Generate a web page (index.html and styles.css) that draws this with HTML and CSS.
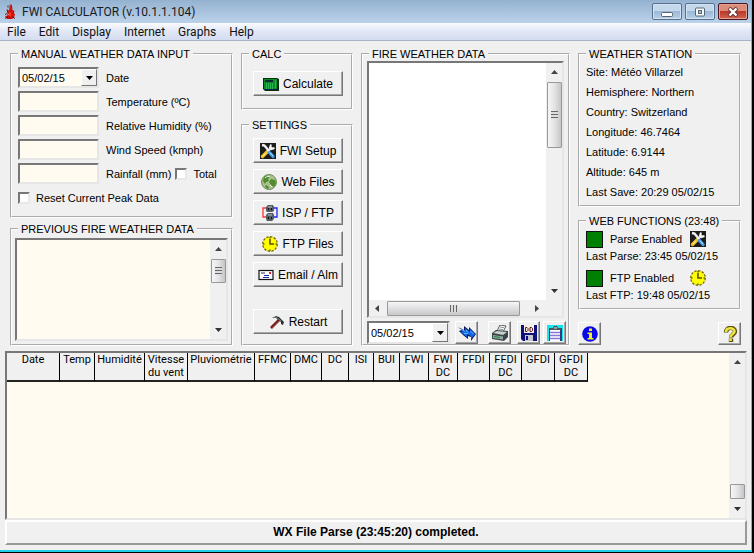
FILE: index.html
```html
<!DOCTYPE html>
<html lang="en">
<head>
<meta charset="utf-8">
<title>FWI CALCULATOR (v.10.1.1.104)</title>
<link rel="stylesheet" href="styles.css">
</head>
<body>
<svg class="defs" aria-hidden="true">
  <symbol id="tools" viewBox="0 0 16 16">
    <rect width="16" height="16" fill="#1c1c1c"/>
    <path d="M2.500 13.500l5-5" stroke="#f2c230" stroke-width="3.400" stroke-linecap="round"/>
    <path d="M3 13l3-3" stroke="#fff0a0" stroke-width="1"/>
    <path d="M8 8l4-4" stroke="#e8e8e8" stroke-width="2.400"/>
    <path d="M11 1.500l-1 3 1.500 1.500 3-1" fill="none" stroke="#f4f4f4" stroke-width="2"/>
    <path d="M2 2l2.500.500L9 8" fill="none" stroke="#f4f4f4" stroke-width="2.400"/>
    <path d="M9.500 9.500l3.500 4" stroke="#3e9be8" stroke-width="3.400" stroke-linecap="round"/>
    <path d="M10 9.500l3 3.500" stroke="#bfe4ff" stroke-width="1"/>
  </symbol>
  <symbol id="clock" viewBox="0 0 16 16">
    <circle cx="8" cy="8" r="7.300" fill="#ff0" stroke="#7a6a00" stroke-width="1.300" stroke-dasharray="2.400 1.400"/>
    <path d="M8 3v5h4" fill="none" stroke="#5c5200" stroke-width="1.600"/>
    <path d="M8 1v1.500M8 13.500V15M1 8h1.500M13.500 8H15" stroke="#222" stroke-width="1"/>
  </symbol>
  <symbol id="up" viewBox="0 0 7 4"><path d="M0 4L3.500 0 7 4z" fill="#444"/></symbol>
  <symbol id="down" viewBox="0 0 7 4"><path d="M0 0h7L3.500 4z" fill="#333"/></symbol>
  <symbol id="drop" viewBox="0 0 7 4"><path d="M0 0h7L3.500 4z" fill="#000"/></symbol>
</svg>

<div class="window">
  <header class="titlebar">
    <svg class="flame" viewBox="0 0 12 16"><path d="M4 9L3 6l2 1 .500-4L6 0l1.500 5L7 8l2-2 .500 3 1.500 2-1 3-2 1.500H3L1 13l2-1 1-3z" fill="#e01208"/><path d="M4 2v2M3 6l1 4M7 1l1 4-1 3M10 7l-1 3M1 11l2-1M1 15l3-2M11 15l-3-2M6 15l-1-3" stroke="#4a1410" stroke-width=".900" fill="none"/><path d="M6 9v4M4 12l1-2" stroke="#ff6a4a" fill="none"/></svg>
    <h1>FWI CALCULATOR (v.10.1.1.104)</h1>
    <div class="controls">
      <button type="button" aria-label="Minimize"><svg viewBox="0 0 12 10"><rect x=".500" y="5.500" width="11" height="4" rx="1" fill="#fff" stroke="#5a6470"/></svg></button>
      <button type="button" aria-label="Maximize"><svg viewBox="0 0 12 10"><rect x="1.500" y="1" width="9" height="8" rx="1" fill="#f4f8fc" stroke="#5a6470"/><rect x="4.500" y="3.500" width="3" height="3" fill="#a8c4e2" stroke="#5a6470"/></svg></button>
      <button type="button" class="close" aria-label="Close"><svg viewBox="0 0 12 10"><path d="M2 1l8 8M10 1L2 9" stroke="#5c3238" stroke-width="4"/><path d="M2.500 1.500l7 7M9.500 1.500l-7 7" stroke="#fff" stroke-width="2.400"/></svg></button>
    </div>
  </header>
  <nav class="menu">
    <a href="#">File</a><a href="#">Edit</a><a href="#">Display</a><a href="#">Internet</a><a href="#">Graphs</a><a href="#">Help</a>
  </nav>

  <main>
    <div class="panels">
      <div class="column">
        <fieldset class="manual">
          <legend>MANUAL WEATHER DATA INPUT</legend>
          <span class="combo"><select id="date"><option>05/02/15</option></select><i><svg><use href="#drop"/></svg></i></span>
          <label for="date">Date</label>
          <input type="text" id="temp"><label for="temp">Temperature (ºC)</label>
          <input type="text" id="hum"><label for="hum">Relative Humidity (%)</label>
          <input type="text" id="wind"><label for="wind">Wind Speed (kmph)</label>
          <input type="text" id="rain">
          <div class="rain"><label for="rain">Rainfall (mm)</label><label class="check"><input type="checkbox">Total</label></div>
          <label class="check reset"><input type="checkbox">Reset Current Peak Data</label>
        </fieldset>
        <fieldset class="previous">
          <legend>PREVIOUS FIRE WEATHER DATA</legend>
          <div class="well cream">
            <textarea aria-label="Previous fire weather data" readonly></textarea>
            <div class="scroll"><svg><use href="#up"/></svg><b class="thumb small"></b><svg class="end"><use href="#down"/></svg></div>
          </div>
        </fieldset>
      </div>

      <div class="column">
        <fieldset class="calc">
          <legend>CALC</legend>
          <button type="button" class="push"><svg class="icon" viewBox="0 0 16 16"><path d="M0 2h14l2 1v12H2l-2-2z" fill="#04300e"/><rect x="1" y="3" width="13" height="10" fill="#0a8a28"/><rect x="2" y="4" width="8" height="2" fill="#0b2a38"/><path d="M3 8h8M3 10h8M3 12h8" stroke="#4be070" stroke-dasharray="1 1"/><path d="M12.500 4v8" stroke="#0c5"/><path d="M1 13.500h14" stroke="#0a1c50"/></svg>Calculate</button>
        </fieldset>
        <fieldset class="settings">
          <legend>SETTINGS</legend>
          <button type="button" class="push"><svg class="icon"><use href="#tools"/></svg>FWI Setup</button>
          <button type="button" class="push"><svg class="icon" viewBox="0 0 16 16"><circle cx="8" cy="8" r="7.500" fill="#a9c08f" stroke="#6f8a58"/><path d="M3 3c3-2 5-1 6 0L7 5l1 2-3 1-1 2-2-3zM10 5l4 1 1 3-2 4-3-2-2-3zM5 11l3 2-1 2-3-2z" fill="#4f8a2c"/><path d="M4 4c2-2 4-2 5-1M9 11l2 2" stroke="#f0f8e4" fill="none"/></svg>Web Files</button>
          <button type="button" class="push"><svg class="icon" viewBox="0 0 16 16"><path d="M5 3H1v9h4" fill="none" stroke="#f33" stroke-width="1.300"/><path d="M11 3h4v9h-4" fill="none" stroke="#22f" stroke-width="1.300"/><path d="M4 2l2-2h5l1 2v4l-2 1H5L4 6z" fill="#535b60"/><path d="M4 10l2-2h5l1 2v4l-2 2H5l-1-2z" fill="#535b60"/><path d="M6 2h4M6 10h4" stroke="#b8c4c8"/><path d="M6 4h1M9 4h1M6 13h1M9 13h1" stroke="#111" stroke-width="2"/></svg>ISP / FTP</button>
          <button type="button" class="push"><svg class="icon"><use href="#clock"/></svg>FTP Files</button>
          <button type="button" class="push"><svg class="icon" viewBox="0 0 16 16"><rect x="1" y="3.500" width="14" height="9" fill="#fff" stroke="#111" stroke-width="1.200"/><path d="M3 6h4" stroke="#334"/><path d="M12 5v2" stroke="#e22" stroke-width="2"/><path d="M6 8.500h5M5 10.500h6" stroke="#22a"/></svg>Email / Alm</button>
          <button type="button" class="push restart"><svg class="icon" viewBox="0 0 16 16"><path d="M2 14l8-8" stroke="#6e1c1c" stroke-width="2.600"/><path d="M3 14l7-7" stroke="#b05048" stroke-width=".700"/><path d="M3 4l4-2 3 1 5 5-1 3-2-1V8L9 6 7 4z" fill="#2b2f33"/><path d="M4 4l3-1 5 4" stroke="#9aa" fill="none" stroke-width=".700"/></svg>Restart</button>
        </fieldset>
      </div>

      <fieldset class="fire">
        <legend>FIRE WEATHER DATA</legend>
        <div class="well">
          <textarea aria-label="Fire weather data" readonly></textarea>
          <div class="scroll"><svg><use href="#up"/></svg><b class="thumb tall"></b><svg class="end"><use href="#down"/></svg></div>
          <div class="hscroll"><svg class="side" viewBox="0 0 4 7"><path d="M4 0v7L0 3.500z" fill="#444"/></svg><b class="thumb wide"></b><svg class="side" viewBox="0 0 4 7"><path d="M0 0v7l4-3.500z" fill="#444"/></svg></div>
        </div>
        <div class="tools">
          <span class="combo white"><select aria-label="Data date"><option>05/02/15</option></select><i><svg><use href="#drop"/></svg></i></span>
          <button type="button" class="tool" aria-label="Go"><svg class="icon arrows" viewBox="0 0 18 16"><path d="M0 2l6 3V1l5 4V2l7 7-5 7v-4l-3-1v3l-5-4-4-4 3-1z" fill="#0a1a60"/><path d="M1 3l6 3V3l5 4V4l5 5-4 5v-3l-4-2v3L5 9l-2-2 2-1z" fill="#1268e8"/><path d="M3 4l4 2.500M8 5l2 2.500M12.500 6l3 3M6 8.500h4" stroke="#58b8ff" fill="none"/></svg></button>
          <button type="button" class="tool print" aria-label="Print"><svg class="icon" viewBox="0 0 16 16"><path d="M5 6l3-6 6 1-3 6z" fill="#fff" stroke="#333" stroke-width=".800"/><path d="M8 2l4 .700M7 4l4 .700" stroke="#678" stroke-width=".800"/><path d="M0 8l4-3 12 1v6l-4 4-12-2z" fill="#3c4646"/><path d="M1 8l4-2 10 1-4 3z" fill="#c8d0d0"/><path d="M1 10l10 1.500v3L1 13z" fill="#9aa8a4"/><path d="M2 11.500l6 1" stroke="#0c8a3a" stroke-width="1.200"/></svg></button>
          <button type="button" class="tool" aria-label="Save"><svg class="icon" viewBox="0 0 16 16"><path d="M0 0h16v16H2l-2-2z" fill="#10107c"/><rect x="3" y="0" width="10" height="8" fill="#f0f0e8"/><path d="M4.500 2.500h1.500l1 1v2l-1 1H4.500zM9 2.500h1.500l1 1v2l-1 1H9z" fill="none" stroke="#611"/><rect x="4" y="10" width="8" height="6" fill="#c8c8d0"/><rect x="5" y="11" width="2" height="4" fill="#10107c"/></svg></button>
          <button type="button" class="tool clip" aria-label="Copy to clipboard"><svg class="icon" viewBox="0 0 16 16"><rect width="16" height="16" fill="#18e4ee"/><rect x="2" y="3" width="13" height="13" fill="#343c80"/><rect x="3" y="5" width="10" height="11" fill="#fff"/><path d="M3 7.500h10M3 10.500h10M3 13.500h10" stroke="#8478d8" stroke-width="1.300"/><path d="M3 5V3h3l1-2h3l1 2h3v2z" fill="#4a5858"/><path d="M7 3h3" stroke="#d4e4e4"/></svg></button>
        </div>
      </fieldset>

      <div class="column">
        <fieldset class="station">
          <legend>WEATHER STATION</legend>
          <p>Site: Météo Villarzel</p>
          <p>Hemisphere: Northern</p>
          <p>Country: Switzerland</p>
          <p>Longitude: 46.7464</p>
          <p>Latitude: 6.9144</p>
          <p>Altitude: 645 m</p>
          <p>Last Save: 20:29 05/02/15</p>
        </fieldset>
        <fieldset class="web">
          <legend>WEB FUNCTIONS (23:48)</legend>
          <div class="state"><b></b><span>Parse Enabled</span><svg class="icon"><use href="#tools"/></svg></div>
          <p>Last Parse: 23:45 05/02/15</p>
          <div class="state"><b></b><span>FTP Enabled</span><svg class="icon"><use href="#clock"/></svg></div>
          <p>Last FTP: 19:48 05/02/15</p>
        </fieldset>
        <div class="help">
          <button type="button" class="tool" aria-label="Information"><svg class="icon" viewBox="0 0 16 16"><circle cx="8" cy="8" r="7.800" fill="#0808e8"/><path d="M7 2.500h3v2.500H7zM5.500 6.500H10V12h1.500v1.500h-6V12H7V8H5.500z" fill="#f4f020"/></svg></button>
          <button type="button" class="tool" aria-label="Help"><svg class="icon" viewBox="0 0 16 16"><path d="M4 6.500c0-6 9-6 9-1C13 8 9 8.500 9 11.500M9 12.500V16" fill="none" stroke="#5a5410" stroke-width="4.400"/><path d="M4 6c0-5 8.500-5 8.500-.500C12.500 8 8.500 8 8.500 11M8.500 12.500V15" fill="none" stroke="#f0e440" stroke-width="2.600"/></svg></button>
        </div>
      </div>
    </div>

    <div class="grid">
      <div class="sheet">
        <table>
          <thead>
            <tr><th>Date</th><th>Temp</th><th>Humidité</th><th>Vitesse<br>du vent</th><th>Pluviométrie</th><th>FFMC</th><th>DMC</th><th>DC</th><th>ISI</th><th>BUI</th><th>FWI</th><th>FWI<br>DC</th><th>FFDI</th><th>FFDI<br>DC</th><th>GFDI</th><th>GFDI<br>DC</th></tr>
          </thead>
          <tbody></tbody>
        </table>
      </div>
      <div class="scroll"><svg><use href="#up"/></svg><b class="thumb low"></b><svg><use href="#down"/></svg></div>
    </div>
    <div class="status" role="status">WX File Parse (23:45:20) completed.</div>
  </main>
</div>
</body>
</html>
```
FILE: styles.css
```css
* { box-sizing: border-box; }
body {
  margin: 0;
  background: #000;
  font: 11px/14px "Liberation Sans", Arial, sans-serif;
  color: #000;
}
.defs { position: absolute; width: 0; height: 0; }
.window {
  min-height: calc(100vh - 1px);
  margin-right: 2px;
  display: flex;
  flex-direction: column;
  background: #f0f0f0;
  border-right: 1px solid #2cd2ee;
  border-bottom: 2px solid #22cfe6;
}

/* Title bar and menu */
.titlebar {
  height: 23px;
  padding: 0 3px 0 4px;
  display: flex;
  align-items: center;
  background: linear-gradient(#94b2d0, #bcd2ea);
}
.flame { width: 12px; height: 17px; margin-right: 6px; }
h1 {
  flex: 1;
  margin: 0;
  font: 12px/18px Roboto, "Noto Sans", sans-serif;
  color: #1a1a22;
}
.controls { display: flex; gap: 3px; }
.controls button {
  width: 30px;
  height: 17px;
  padding: 0;
  display: grid;
  place-items: center;
  border: 1px solid #56708e;
  border-radius: 2px;
  box-shadow: inset 0 0 0 1px #d4e3f2;
  background: linear-gradient(#c4d8ec 50%, #9ab8d8 50%, #b8d0e8);
}
.controls svg { width: 12px; height: 10px; }
.controls .close {
  border-color: #4c1420;
  box-shadow: inset 0 0 0 1px #e0a496;
  background: linear-gradient(#dc8c78 45%, #b8392a 50%, #d4654e);
}
.menu {
  height: 18px;
  padding: 0 7px;
  display: flex;
  align-items: center;
  gap: 13px;
  background: linear-gradient(#fafbfe, #e2e8f6 45%, #d4dcf0);
  border-bottom: 1px solid #aab2c4;
}
.menu a {
  font: 12px/16px Roboto, "Noto Sans", sans-serif;
  color: #111;
  text-decoration: none;
}

main { flex: 1; display: flex; flex-direction: column; padding: 6px 4px 5px 5px; }
.panels {
  display: grid;
  grid-template-columns: 223fr 112fr 209fr 163fr;
  gap: 8px;
  padding: 0 6px 0 5px;
}
.column { display: flex; flex-direction: column; gap: 4px; min-width: 0; }
fieldset {
  --side: 6px;
  margin: 0;
  min-width: 0;
  padding: 0 var(--side);
  border: 2px groove #fff;
}
legend { margin-left: calc(6px - var(--side)); padding: 0 3px; }
p { margin: 0; }

/* Sunken inputs */
input[type="text"], .combo, .well, .grid {
  border: 2px solid;
  border-color: #777 #e6e6e6 #e6e6e6 #777;
  background: #fffbf0;
}
input[type="text"] { width: 81px; height: 21px; }
.combo { display: grid; width: 81px; height: 21px; }
.combo select {
  grid-area: 1 / 1;
  appearance: none;
  padding: 0 2px;
  border: 0;
  background: none;
  font: inherit;
  color: inherit;
}
.combo i {
  grid-area: 1 / 1;
  justify-self: end;
  width: 16px;
  display: grid;
  place-items: center;
  pointer-events: none;
  border: 1px solid;
  border-color: #fff #777 #777 #fff;
  background: #f0f0f0;
}
.combo svg { width: 7px; height: 4px; }
.combo.white { background: #fff; }
input[type="checkbox"] {
  appearance: none;
  width: 12px;
  height: 12px;
  margin: 0 6px 0 0;
  border: 2px solid;
  border-color: #777 #e8e8e8 #e8e8e8 #777;
  background: #fff;
}
.check { display: flex; align-items: center; }

.manual {
  display: grid;
  grid-template-columns: 81px 1fr;
  grid-auto-rows: 21px;
  gap: 3px 7px;
  align-items: center;
  padding-top: 6px;
  padding-bottom: 8px;
}
.rain { display: flex; gap: 4px; }
.reset { grid-column: 1 / 3; }
.previous { --side: 3px; flex: 1; display: grid; padding-top: 2px; padding-bottom: 3px; }

/* Lists with scroll bars */
.well { display: grid; grid-template-columns: 1fr 16px; background: #fff; min-height: 0; }
.cream { background: #fffbf0; }
textarea {
  width: 100%;
  height: 100%;
  min-height: 0;
  padding: 2px;
  border: 0;
  resize: none;
  background: none;
  overflow: hidden;
}
.scroll {
  width: 16px;
  padding: 7px 0;
  display: flex;
  flex-direction: column;
  align-items: center;
  background: #f0f0f0;
}
.scroll svg { flex: none; width: 7px; height: 4px; }
.scroll .end { margin-top: auto; }
.thumb {
  width: 15px;
  display: grid;
  place-items: center;
  border: 1px solid #999;
  border-radius: 1px;
  background: linear-gradient(90deg, #f6f6f6, #e4e4e6 50%, #c6c6ca);
}
.small { height: 24px; margin-top: 8px; }
.tall { height: 66px; margin-top: 8px; }
.low { height: 15px; margin: auto 0 8px; }
.small::after, .tall::after {
  content: "";
  width: 7px;
  height: 8px;
  background: repeating-linear-gradient(#666 0 1px, #ddd 1px 3px);
}
.hscroll {
  grid-column: 1 / 3;
  height: 16px;
  padding: 0 23px 0 6px;
  display: flex;
  align-items: center;
  background: #f0f0f0;
}
.side { width: 4px; height: 7px; }
.wide {
  width: 133px;
  height: 15px;
  margin: 0 auto 0 8px;
  background: linear-gradient(#f6f6f6, #e0e0e2 50%, #c8c8cc);
}
.wide::after {
  content: "";
  width: 8px;
  height: 7px;
  background: repeating-linear-gradient(90deg, #666 0 1px, #ddd 1px 3px);
}

/* Push buttons */
.push, .tool {
  border: 1px solid;
  border-color: #fff #777 #777 #fff;
  box-shadow: inset -1px -1px #a8a8a8;
  background: #f0f0f0;
  color: #000;
}
.push {
  width: 90px;
  height: 25px;
  padding: 0;
  display: flex;
  align-items: center;
  justify-content: center;
  gap: 4px;
  font: 12px/16px "Liberation Sans", Arial, sans-serif;
  white-space: nowrap;
}
.icon { flex: none; width: 16px; height: 16px; }
.arrows { width: 18px; }
.tool { width: 23px; height: 23px; padding: 0; display: grid; place-items: center; }
.calc { --side: 10px; padding-top: 10px; padding-bottom: 12px; }
.settings {
  --side: 10px;
  flex: 1;
  display: flex;
  flex-direction: column;
  padding-top: 6px;
}
.settings .push { margin-bottom: 6px; }
.column .calc { margin-bottom: 4px; }
.settings .restart { margin-top: 16px; }

.fire { --side: 4px; display: flex; flex-direction: column; padding-right: 2px; }
.fire .well { height: 257px; flex: none; grid-template-rows: 1fr 16px; margin-right: 2px; }
.tools { display: flex; margin-top: 3px; }
.tools .combo { width: 83px; height: 23px; margin-right: 5px; }
.tools .print { margin: 0 6px 0 auto; }
.tools .clip { margin-left: 3px; }

.station { padding-top: 1px; padding-bottom: 3px; }
.station p { line-height: 20px; }
.web { margin-top: 3px; padding-top: 2px; }
.web p { padding: 1px 0 6px; }
.state { display: flex; align-items: center; height: 18px; }
.state b { width: 17px; height: 17px; margin-right: 7px; border: 1px solid #111; background: #008000; }
.state span { width: 80px; }
.help { display: flex; justify-content: space-between; margin: auto 0 1px; }

/* Results table */
.grid { flex: 1; display: flex; margin-top: 5px; min-height: 168px; }
.sheet { flex: 1; }
table { border-collapse: separate; border-spacing: 0; table-layout: fixed; width: 581px; }
th {
  height: 29px;
  padding: 0;
  vertical-align: top;
  border-right: 1px solid #000;
  border-bottom: 2px solid #222;
  background: #f0f0f0;
  font: 11px/13px Roboto, Tahoma, sans-serif;
}
th:nth-child(1) { width: 53px; }
th:nth-child(2) { width: 35px; }
th:nth-child(3) { width: 50px; }
th:nth-child(4) { width: 43px; }
th:nth-child(5) { width: 67px; }
th:nth-child(6) { width: 36px; }
th:nth-child(7) { width: 31px; }
th:nth-child(8) { width: 27px; }
th:nth-child(9) { width: 25px; }
th:nth-child(10) { width: 26px; }
th:nth-child(11), th:nth-child(12) { width: 29px; }
th:nth-child(13), th:nth-child(14) { width: 32px; }
th:nth-child(15), th:nth-child(16) { width: 33px; }
.status {
  height: 25px;
  border: 2px solid;
  border-color: #fff #999 #999 #fff;
  font: bold 12px/21px "Liberation Sans", Arial, sans-serif;
  text-align: center;
}
```
